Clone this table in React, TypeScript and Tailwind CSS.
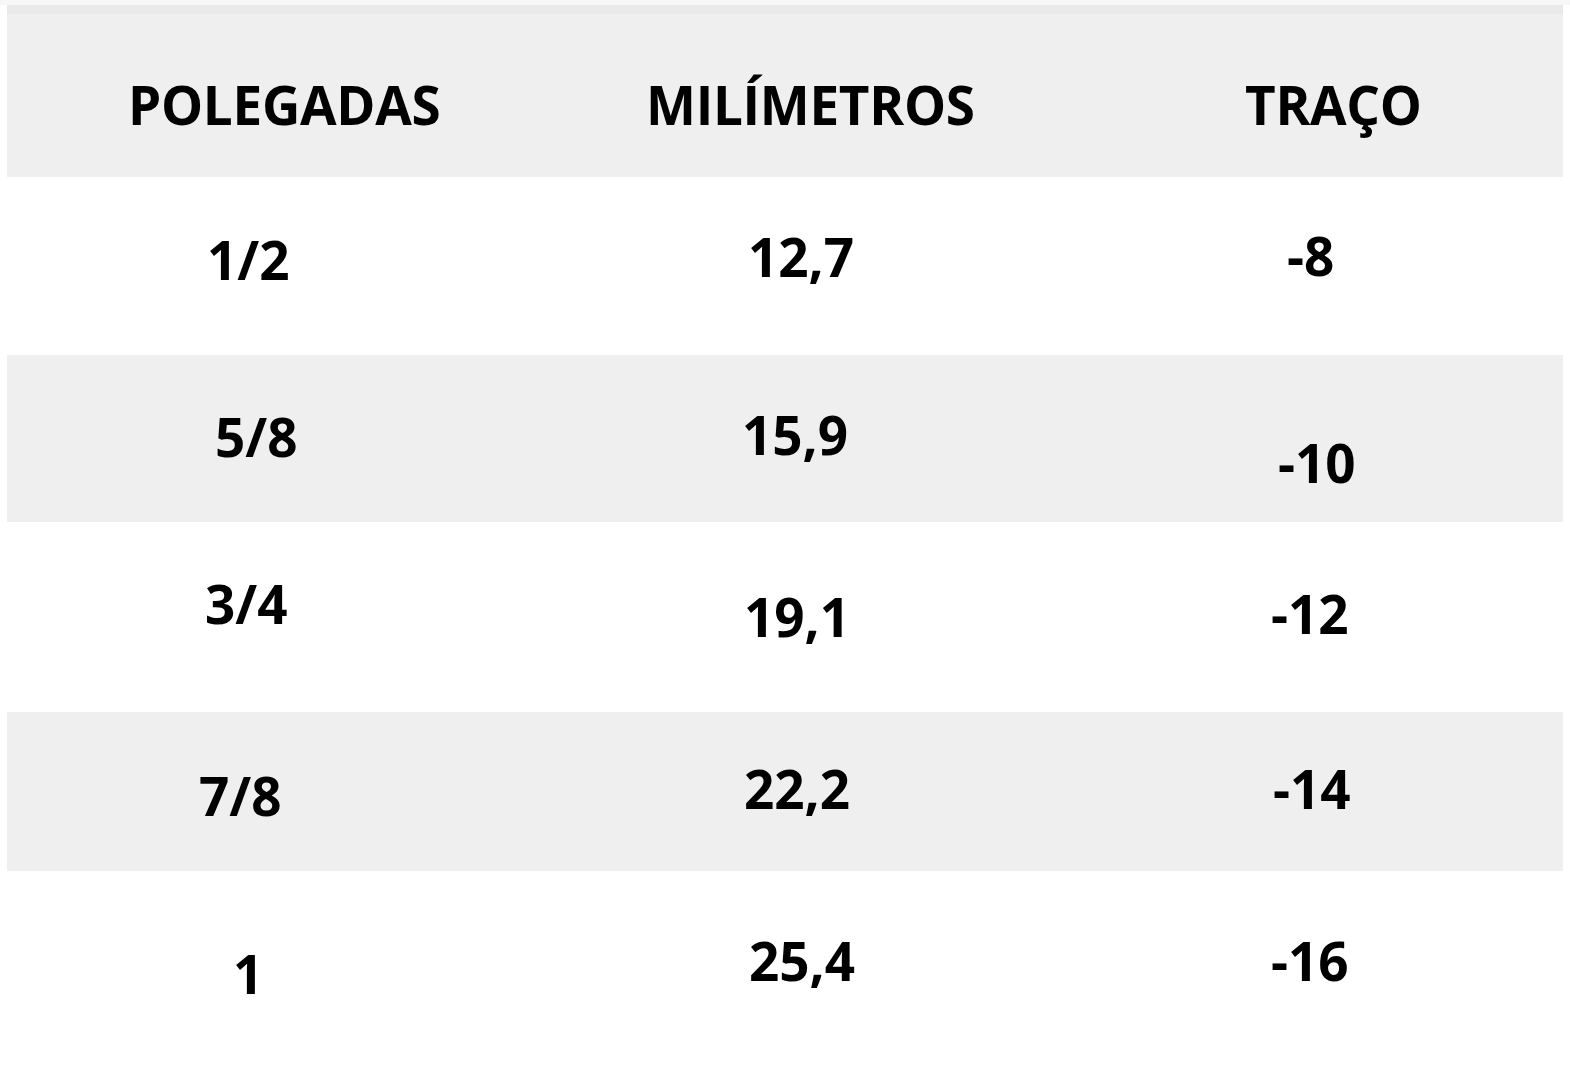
const rows = [
  {
    bg: "bg-white h-[178px]",
    cells: [
      { text: "1/2", cls: "pl-[200px] pt-[56px]" },
      { text: "12,7", cls: "pl-[218px] pt-[53px]" },
      { text: "-8", cls: "pl-[217px] pt-[52px]" },
    ],
  },
  {
    bg: "bg-[#efefef] h-[167px]",
    cells: [
      { text: "5/8", cls: "pl-[208px] pt-[55px]" },
      { text: "15,9", cls: "pl-[212px] pt-[53px]" },
      { text: "-10", cls: "pl-[208px] pt-[81px]" },
    ],
  },
  {
    bg: "bg-white h-[190px]",
    cells: [
      { text: "3/4", cls: "pl-[198px] pt-[55px]" },
      { text: "19,1", cls: "pl-[214px] pt-[68px]" },
      { text: "-12", cls: "pl-[201px] pt-[65px]" },
    ],
  },
  {
    bg: "bg-[#efefef] h-[159px]",
    cells: [
      { text: "7/8", cls: "pl-[192px] pt-[57px]" },
      { text: "22,2", cls: "pl-[214px] pt-[50px]" },
      { text: "-14", cls: "pl-[203px] pt-[50px]" },
    ],
  },
  {
    bg: "bg-white h-[209px]",
    cells: [
      { text: "1", cls: "pl-[226px] pt-[76px]" },
      { text: "25,4", cls: "pl-[219px] pt-[63px]" },
      { text: "-16", cls: "pl-[201px] pt-[63px]" },
    ],
  },
];

const headers = [
  { text: "POLEGADAS", cls: "pl-[121px] pt-[64px]" },
  { text: "MILÍMETROS", cls: "pl-[116px] pt-[64px]" },
  { text: "TRAÇO", cls: "pl-[175px] pt-[64px]" },
];

export default function App() {
  return (
    <div
      className="w-[1570px] h-[1080px] overflow-hidden bg-white text-black"
      style={{ fontFamily: '"Open Sans", "Liberation Sans", sans-serif' }}
    >
      <div className="h-[5px] bg-[#f7f7f7]" />
      <div className="px-[7px]">
        {/* header */}
        <div className="grid grid-cols-[523px_540px_493px] h-[172px] bg-[#efefef] border-t-[9px] border-[#e9e9e9]">
          {headers.map((h) => (
            <div key={h.text} className={h.cls}>
              <span className="block text-[53px] leading-none font-bold tracking-[-0.3px]">{h.text}</span>
            </div>
          ))}
        </div>

        {rows.map((r, i) => (
          <div key={i} className={"grid grid-cols-[523px_540px_493px] " + r.bg}>
            {r.cells.map((c) => (
              <div key={c.text} className={c.cls}>
                <span className="block text-[53px] leading-none font-bold">{c.text}</span>
              </div>
            ))}
          </div>
        ))}
      </div>
    </div>
  );
}
